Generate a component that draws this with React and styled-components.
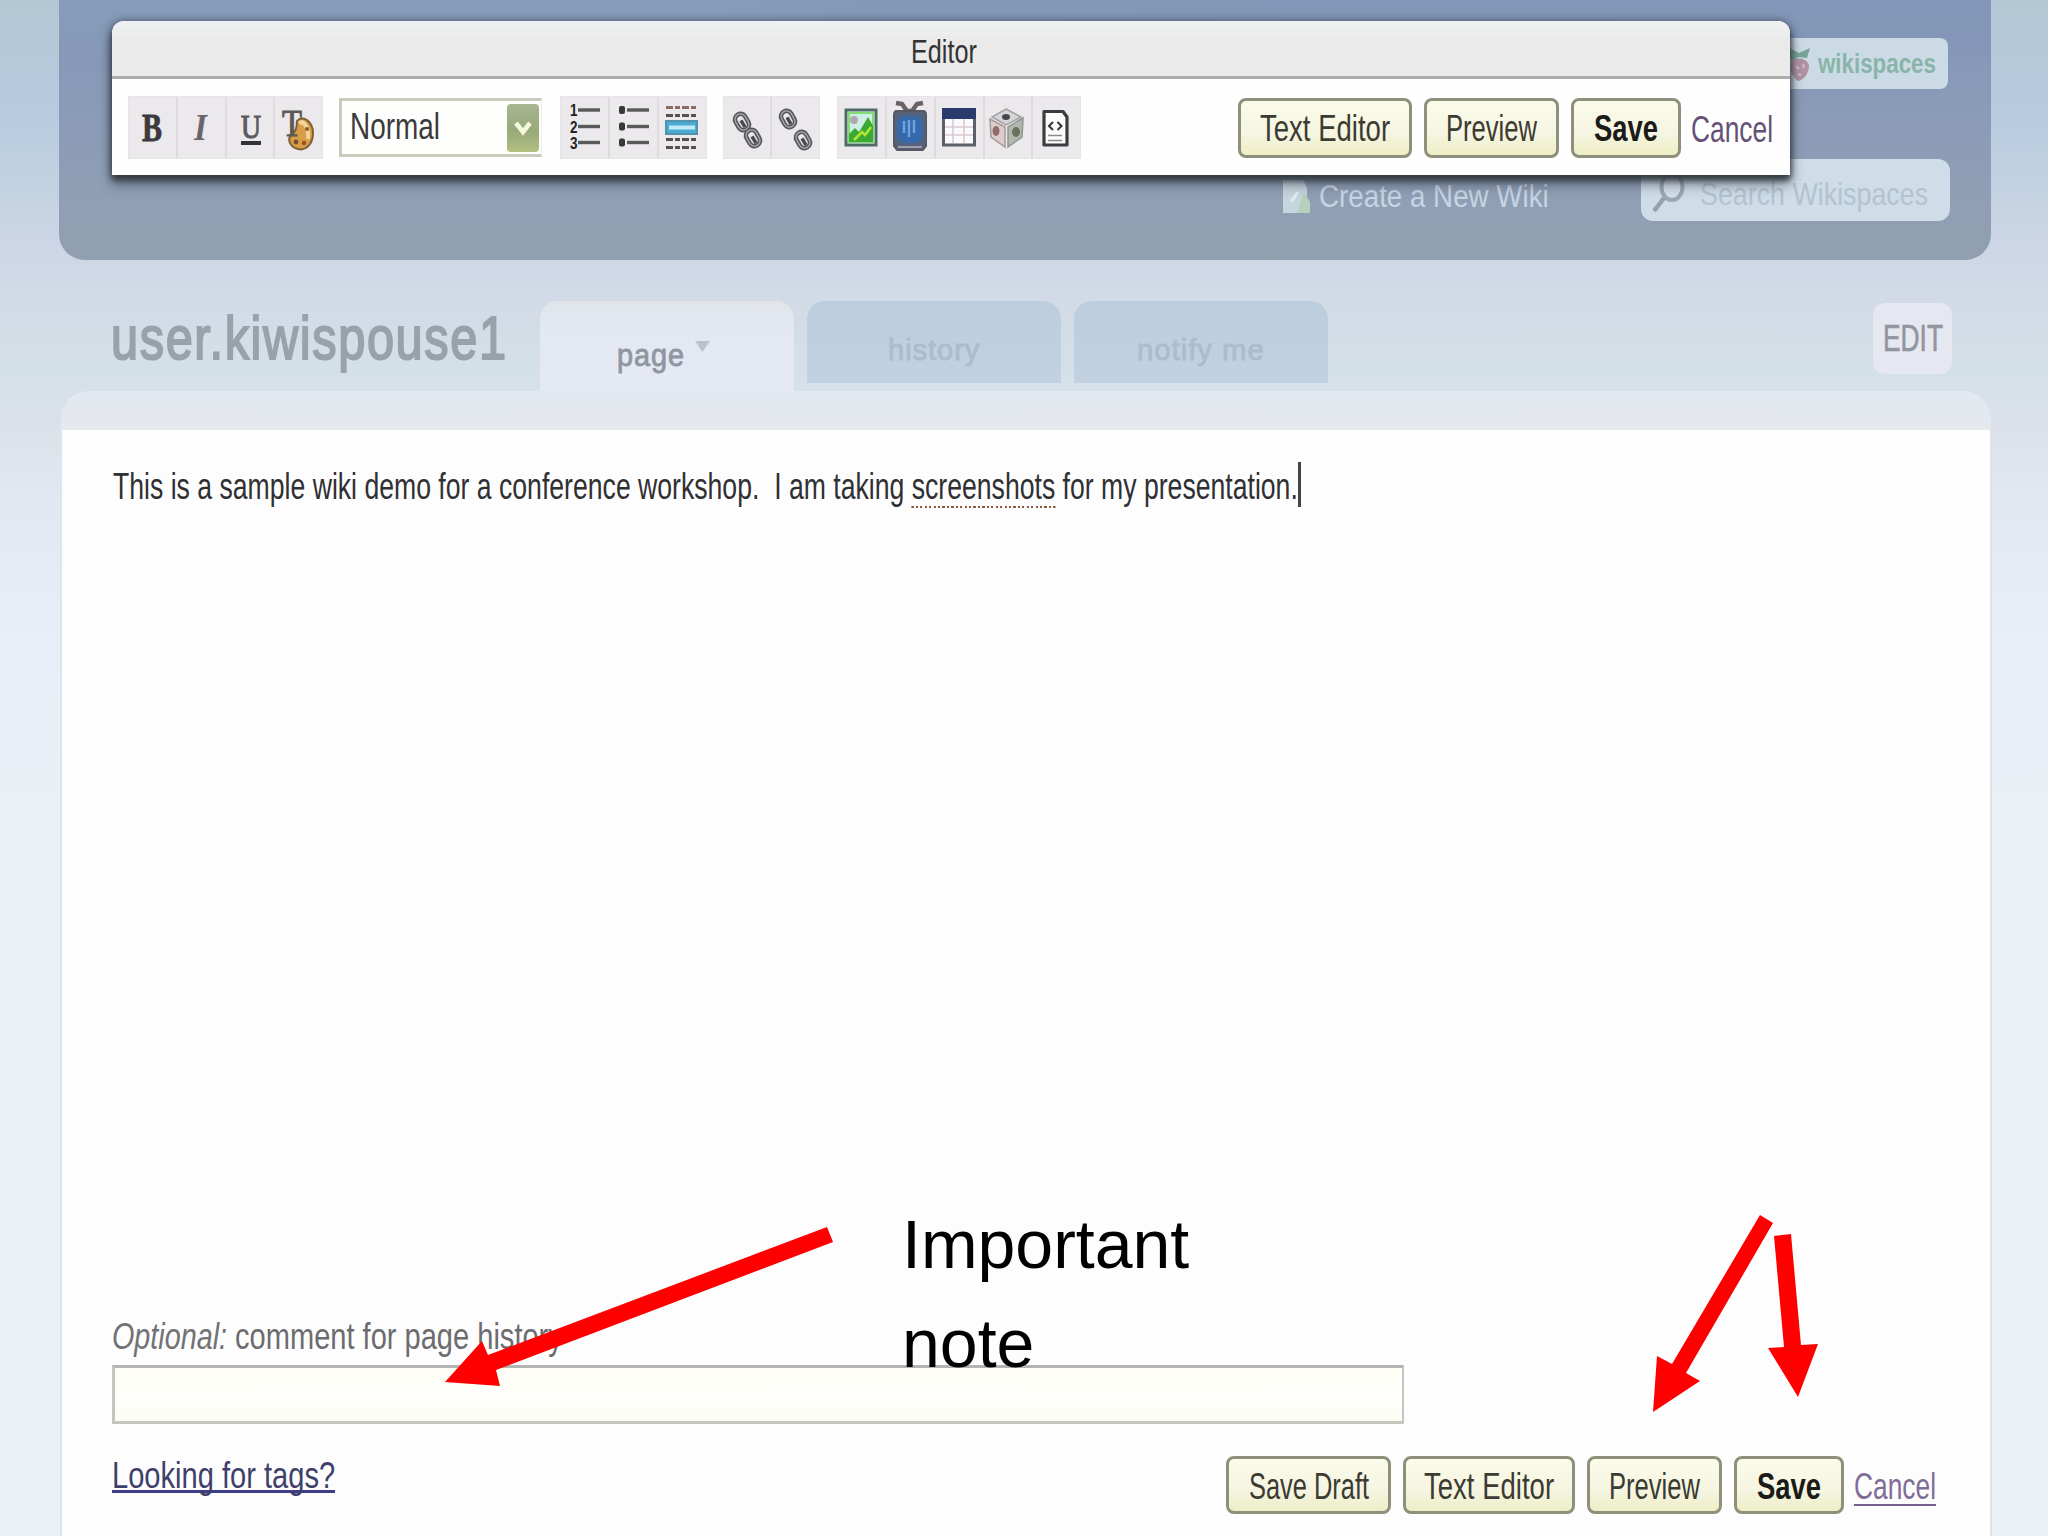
import React, { useLayoutEffect, useRef, useState } from 'react';
import styled, { createGlobalStyle, css } from 'styled-components';

const GlobalStyle = createGlobalStyle`
  * { box-sizing: border-box; }
  html, body { margin: 0; padding: 0; }
  body { font-family: "Liberation Sans", Arial, sans-serif; overflow: hidden; }
`;

/* ---------- condensed text: squeezed horizontally to a set width ---------- */
const FitBox = styled.span`
  display: inline-block;
  flex: none;
  width: ${(p) => p.$w}px;
  font-family: "Liberation Sans", Arial, sans-serif;
  font-size: ${(p) => p.$size || 36}px;
  font-weight: ${(p) => (p.$bold ? 700 : 400)};
  font-style: ${(p) => (p.$italic ? 'italic' : 'normal')};
  line-height: ${(p) => p.$line || 44}px;
  letter-spacing: ${(p) => p.$spacing || 0}px;
  color: ${(p) => p.$color || '#222'};
  -webkit-text-stroke: ${(p) => p.$stroke || 0}px ${(p) => p.$color || '#222'};
  white-space: pre;
`;
const FitInner = styled.span`
  display: inline-block;
  transform-origin: 0 50%;
`;
function Fit({ w, size, bold, italic, color, line, spacing, stroke, children }) {
  const ref = useRef(null);
  const [scale, setScale] = useState(1);
  useLayoutEffect(() => {
    if (ref.current) setScale(w / ref.current.offsetWidth);
  }, [w]);
  return (
    <FitBox $w={w} $size={size} $bold={bold} $italic={italic} $color={color} $line={line} $spacing={spacing} $stroke={stroke}>
      <FitInner ref={ref} style={{ transform: `scaleX(${scale})` }}>{children}</FitInner>
    </FitBox>
  );
}

/* ---------- page ---------- */
const Page = styled.div`
  position: relative;
  display: flex;
  flex-direction: column;
  width: 2048px;
  height: 1536px;
  overflow: hidden;
  background: linear-gradient(180deg, #b3c7d4 0, #b6cbdf 110px, #c3d2e2 190px, #cfd7e7 262px, #d3dce6 320px, #d4e0e8 370px, #dce1ea 430px, #e2e7f1 500px, #e8eef8 620px, #ebf0f7 800px, #ebf0f6 1536px);
`;

const Masthead = styled.header`
  display: flex;
  flex-direction: column;
  align-items: flex-end;
  flex: none;
  height: 260px;
  margin: 0 57px 0 59px;
  padding: 38px 41px 0 0;
  border-radius: 0 0 26px 26px;
  background:
    radial-gradient(ellipse 1300px 60px at 1950px 0, rgba(125, 142, 180, 0.35) 0, rgba(125, 142, 180, 0.3) 85%, transparent 100%),
    linear-gradient(180deg, #859cb9 0, #8799b8 60px, #8c9cb7 130px, #909fb4 200px, #919fb1 260px);
`;
const Brand = styled.div`
  display: flex;
  align-items: center;
  gap: 5px;
  width: 210px;
  height: 51px;
  margin-right: 2px;
  padding-left: 49px;
  border-radius: 8px;
  background: #ccdae6;
`;
const MastRow = styled.div`
  display: flex;
  gap: 92px;
  margin-top: 70px;
`;
const CreateLink = styled.div`
  display: flex;
  align-items: center;
  gap: 9px;
  height: 62px;
  padding-top: 13px;
`;
const Search = styled.div`
  display: flex;
  align-items: center;
  gap: 14px;
  width: 309px;
  height: 62px;
  padding: 8px 0 0 11px;
  border-radius: 12px;
  background: #cedde8;
`;

/* ---------- tabs ---------- */
const TitleRow = styled.div`
  display: flex;
  flex: none;
  height: 131px;
  padding: 41px 96px 0 110px;
`;
const Title = styled.h1`
  margin: 0;
  width: 430px;
  height: 72px;
  padding: 1px 0 0 1px;
`;
const Tab = styled.div`
  display: flex;
  align-items: center;
  justify-content: center;
  width: 254px;
  height: 82px;
  margin-left: 13px;
  padding-top: 16px;
  border-radius: 18px 18px 0 0;
  background: linear-gradient(180deg, #bccddd, #c1d1e1);
  ${(p) => p.$active && css`
    gap: 10px;
    height: 90px;
    margin-left: 0;
    padding: 20px 8px 0 0;
    background: linear-gradient(180deg, #e1e5eb, #e4e8f3 40%, #e4e9f2);
  `}
`;
const EditButton = styled.div`
  display: flex;
  align-items: center;
  justify-content: center;
  width: 79px;
  height: 71px;
  margin: 2px 0 0 auto;
  padding-top: 1px;
  border-radius: 12px;
  background: #e5e7f1;
`;
const Strip = styled.div`
  flex: none;
  height: 39px;
  margin: 0 57px 0 61px;
  border-radius: 28px 28px 0 0;
  background: linear-gradient(180deg, #e3e9f1, #e4e8ee 70%, #e6e9ec);
`;

/* ---------- document ---------- */
const Document = styled.main`
  display: flex;
  flex-direction: column;
  flex: 1;
  margin: 0 56px 0 60px;
  padding: 35px 54px 22px 50px;
  border-left: 2px solid #dce4ee;
  border-right: 2px solid #dfe2ea;
  background: #fdfdfe;
`;
const Line = styled.div`
  display: flex;
  height: 44px;
  padding-left: ${(p) => p.$indent || 0}px;
`;
const Misspelled = styled.span`
  background: repeating-linear-gradient(90deg, #8a5a44 0 3px, transparent 3px 6px) 0 100% / 100% 2px no-repeat;
  padding-bottom: 1px;
`;
const Caret = styled.span`
  width: 3px;
  height: 45px;
  margin: -3px 0 0 0;
  background: #444;
`;
const Spacer = styled.div`
  flex: 1;
`;
const CommentBox = styled.div`
  flex: none;
  width: 1292px;
  height: 59px;
  margin: 6px 0 32px;
  border: 3px solid #c6c6c0;
  border-top-color: #b4b4b2;
  border-right-width: 2px;
  background: linear-gradient(180deg, #fefef6, #fffffc 60%, #fdfdf3);
`;
const FooterRow = styled.div`
  display: flex;
  flex: none;
  height: 58px;
`;
const TagsLink = styled.a`
  display: flex;
  align-items: flex-start;
  height: 37px;
  border-bottom: 3px solid #3e3e88;
`;
const Actions = styled.div`
  display: flex;
  align-items: center;
  gap: 12px;
  height: ${(p) => p.$h}px;
  margin-left: auto;
`;
const Button = styled.button`
  display: flex;
  align-items: center;
  justify-content: center;
  flex: none;
  width: ${(p) => p.$w}px;
  height: ${(p) => p.$h || 58}px;
  padding: 3px 0 0;
  border: 3px solid #8f907c;
  border-radius: 8px;
  background: linear-gradient(180deg, #fbfbe9, #f5f5e2 60%, #eeeec6);
`;
const CancelLink = styled.a`
  display: flex;
  align-items: flex-start;
  height: 42px;
  margin-left: -2px;
  border-bottom: ${(p) => (p.$underlined ? '2px solid #75608d' : '0 solid transparent')};
`;

/* ---------- floating editor ---------- */
const EditorWindow = styled.section`
  position: absolute;
  left: 112px;
  top: 21px;
  width: 1678px;
  height: 154px;
  border-radius: 12px 12px 0 0;
  background: #fefefe;
  box-shadow: 0 5px 6px #34393f, 0 9px 14px rgba(50, 55, 70, 0.55), 0 0 8px rgba(50, 58, 70, 0.65);
`;
const EditorTitle = styled.div`
  display: flex;
  justify-content: center;
  height: 58px;
  padding: 8px 14px 0 0;
  border-bottom: 3px solid #adaeac;
  border-radius: 12px 12px 0 0;
  background: linear-gradient(180deg, #f0f1f3, #eaebe9 35%, #ebebeb);
`;
const Toolbar = styled.div`
  display: flex;
  height: 96px;
  padding: 17px 17px 0 16px;
`;
const Group = styled.div`
  display: flex;
  flex: none;
  gap: 2px;
  height: 63px;
  margin-right: ${(p) => p.$gap}px;
  background: #dddbdd;
  border: 1px solid #e6e4e6;
`;
const Cell = styled.div`
  width: 46.8px;
  background: #ebe9eb;
  svg { display: block; margin-left: -1px; }
`;
const Select = styled.div`
  display: flex;
  justify-content: space-between;
  width: 203px;
  height: 59px;
  margin: 2px 18px 0 0;
  padding: 1px 2px 0 8px;
  border: 3px solid #c9ccbc;
  border-right: 1px solid #eef0e6;
  background: #fefefd;
`;
const SelectLabel = styled.div`
  padding-top: 3px;
`;
const SelectArrow = styled.div`
  display: flex;
  align-items: center;
  justify-content: center;
  width: 32px;
  height: 48px;
  margin-top: 2px;
  border-radius: 4px;
  background: linear-gradient(180deg, #a9b692, #98a97b 55%, #b2c07e);
`;

/* ---------- annotations ---------- */
const Arrows = styled.svg`
  position: absolute;
  left: 0;
  top: 0;
  pointer-events: none;
`;
const Note = styled.div`
  position: absolute;
  left: 902px;
  top: 1195px;
  width: 330px;
  font-size: 68px;
  line-height: 98.5px;
  color: #000;
`;

const Ico = ({ children, w = 47 }) => (
  <svg width={w} height="61" viewBox={`0 0 ${w} 61`}>{children}</svg>
);
const serif = '"Liberation Serif", "Times New Roman", serif';

const BoldIcon = () => (
  <Ico><text x="14" y="44" fontFamily={serif} fontWeight="700" fontSize="39" textLength="20" lengthAdjust="spacingAndGlyphs" fill="#3c3a3e" stroke="#3c3a3e" strokeWidth="0.8">B</text></Ico>
);
const ItalicIcon = () => (
  <Ico><text x="17" y="43" fontFamily={serif} fontStyle="italic" fontWeight="700" fontSize="38" textLength="13" lengthAdjust="spacingAndGlyphs" fill="#67656b">I</text></Ico>
);
const UnderlineIcon = () => (
  <Ico>
    <text x="15" y="41" fontFamily={serif} fontSize="34" textLength="20" lengthAdjust="spacingAndGlyphs" fill="#5c5a60" stroke="#5c5a60" strokeWidth="1.2">U</text>
    <path d="M15 46H35" stroke="#343438" strokeWidth="4" />
  </Ico>
);
const TextColorIcon = () => (
  <Ico>
    <path d="M23 24C30 17 39 26 39 36C39 47 32 54 24 52C16 50 13 43 17 38C20 35 23 34 23 24Z" fill="#d99d45" stroke="#806036" strokeWidth="2" />
    <path d="M25 26C31 23 35 32 34 42" fill="none" stroke="#f3d49a" strokeWidth="4" />
    <circle cx="22" cy="45" r="2.4" fill="#754e30" /><circle cx="30" cy="46" r="2.2" fill="#9c4c25" /><circle cx="33" cy="32" r="2" fill="#8b5827" />
    <text x="8" y="39" fontFamily={serif} fontSize="38" textLength="20" lengthAdjust="spacingAndGlyphs" fill="#5c5a54" stroke="#5c5a54" strokeWidth="1">T</text>
  </Ico>
);
const rows = [13, 29.5, 45.5];
const OrderedIcon = () => (
  <Ico>
    {rows.map((y, i) => (
      <g key={y}>
        <text x="10" y={y + 6} fontWeight="700" fontSize="16" textLength="7.5" lengthAdjust="spacingAndGlyphs" fill="#222">{i + 1}</text>
        <path d={`M18 ${y}H40`} stroke="#5a5a5a" strokeWidth="3.4" />
      </g>
    ))}
  </Ico>
);
const BulletIcon = () => (
  <Ico>
    {rows.map((y) => (
      <g key={y}>
        <rect x="10" y={y - 4} width="6" height="8" rx="2" fill="#383838" />
        <path d={`M18 ${y}H40`} stroke="#5a5a5a" strokeWidth="3.4" />
      </g>
    ))}
  </Ico>
);
const RuleIcon = () => (
  <Ico>
    <g strokeWidth="3" stroke="#5a5053" strokeDasharray="7 2 5 2">
      <path d="M8 10.5H40" stroke="#8a6a64" /><path d="M8 18.5H40" /><path d="M8 42.5H40" /><path d="M8 50.5H40" />
    </g>
    <rect x="8" y="24" width="31" height="13" fill="#4aaad2" stroke="#5193ad" strokeWidth="2" />
    <path d="M11 30.5H37" stroke="#c2eaf6" strokeWidth="4" />
  </Ico>
);
const Chain = ({ x, y }) => (
  <g transform={`translate(${x} ${y}) rotate(-30)`}>
    <rect x="-5.5" y="-8.5" width="11" height="17" rx="5.5" fill="none" stroke="#58575a" strokeWidth="4.6" />
    <rect x="-5.5" y="-8.5" width="11" height="17" rx="5.5" fill="none" stroke="#aeacaf" strokeWidth="1.2" />
    <path d="M0 -2V6" stroke="#4b494c" strokeWidth="3.5" />
  </g>
);
const LinkIcon = () => <Ico><Chain x={19} y={25} /><Chain x={30} y={41} /></Ico>;
const UnlinkIcon = () => <Ico><Chain x={17} y={22} /><Chain x={32} y={43} /></Ico>;
const ImageIcon = () => (
  <Ico>
    <rect x="9" y="13" width="30" height="35" fill="#eefaf0" stroke="#4c6c65" strokeWidth="3" />
    <rect x="12" y="16" width="24" height="29" fill="#cfeee4" stroke="#86dd78" strokeWidth="2" />
    <circle cx="17" cy="23" r="4" fill="#b1a7b4" />
    <path d="M12 45V37L18 31L22 35L31 20L36 29V45Z" fill="#3aaa34" />
    <path d="M17 43L25 35L28 38L34 30" stroke="#b4e52f" strokeWidth="2.5" fill="none" />
  </Ico>
);
const TvIcon = () => (
  <Ico>
    <path d="M10 6L16 7L21 14L26 14L31 7L37 6" fill="none" stroke="#6b6168" strokeWidth="4.5" />
    <path d="M11 14H37Q40 14 40 18V49L37 53H11L8 49V18Q8 14 11 14Z" fill="#55627c" stroke="#585865" strokeWidth="2" strokeLinejoin="round" />
    <rect x="11" y="19" width="26" height="27" rx="8" fill="#3569ab" />
    <path d="M18 24V36M23 23V40M28 23V36" stroke="#6ea3dc" strokeWidth="2.5" />
    <path d="M12 50H36" stroke="#a09ca5" strokeWidth="2" />
  </Ico>
);
const TableIcon = () => (
  <Ico>
    <rect x="8.5" y="13" width="31" height="35" fill="#fafafa" stroke="#5c5e69" strokeWidth="3" />
    <rect x="7" y="11" width="34" height="11" fill="#2b3a6c" />
    <path d="M18 22V46M29 22V46M10 30H38M10 38H38" stroke="#d9c9d5" strokeWidth="1.6" />
  </Ico>
);
const CubeIcon = () => (
  <Ico>
    <path d="M22 12L37 20L22 28L8 20Z" fill="#d6d5d7" stroke="#a5a1a3" strokeWidth="1.5" />
    <path d="M6 22L21 30L21 50L7 40Z" fill="#dccdcd" stroke="#a59a9a" strokeWidth="1.5" />
    <path d="M39 21L24 30L24 50L38 40Z" fill="#b3b8ae" stroke="#92968f" strokeWidth="1.5" />
    <ellipse cx="22" cy="20" rx="4" ry="3" fill="#47464b" /><ellipse cx="12" cy="34" rx="3.5" ry="5" fill="#95686a" /><ellipse cx="32" cy="35" rx="4" ry="5" fill="#69725f" />
  </Ico>
);
const CodeIcon = () => (
  <Ico>
    <path d="M12 14.500H31L35 20V48H12Z" fill="#fbfbfb" stroke="#3c3c3e" strokeWidth="3.2" strokeLinejoin="round" />
    <path d="M21 25L17 29L21 33M25.5 25L29.5 29L25.5 33" fill="none" stroke="#333" strokeWidth="2" />
    <path d="M16 38.5H30M16 43.5H30" stroke="#8b8b8b" strokeWidth="1.6" />
  </Ico>
);
const Berry = () => (
  <svg width="26" height="38" viewBox="0 0 26 38">
    <path d="M4 17C9 11 20 13 22 20C22 29 17 35 11 36C6 33 2 25 4 17Z" fill="#b093a3" />
    <path d="M1 2L12 8L23 3L20 13L12 12L4 16Z" fill="#76a696" />
    <path d="M9 21L12 24M16 19L17 23M11 29L14 30" stroke="#d3bcc8" strokeWidth="2" />
  </svg>
);
const WikiPageIcon = () => (
  <svg width="27" height="34" viewBox="0 0 27 34">
    <path d="M0 0H20L24 8V33H0Z" fill="#c6d6df" />
    <path d="M21 12L27 22V33H14Z" fill="#b5d0bd" /><path d="M15 12L8 22" stroke="#e3edf1" strokeWidth="3" />
  </svg>
);
const Magnifier = () => (
  <svg width="34" height="42" viewBox="0 0 34 42">
    <ellipse cx="20" cy="14" rx="10.5" ry="13" fill="#d5e1ea" stroke="#9aa9b3" strokeWidth="4" />
    <path d="M12 25L2 38" stroke="#93a2ac" strokeWidth="4.5" />
  </svg>
);

export default function App() {
  return (
    <Page>
      <GlobalStyle />
      <Masthead>
        <Brand>
          <Berry />
          <Fit w={118} size={28} bold color="#88b5a8">wikispaces</Fit>
        </Brand>
        <MastRow>
          <CreateLink>
            <WikiPageIcon />
            <Fit w={230} size={31} color="#c6d5e5">Create a New Wiki</Fit>
          </CreateLink>
          <Search>
            <Magnifier />
            <Fit w={228} size={32} color="#b3c3cf">Search Wikispaces</Fit>
          </Search>
        </MastRow>
      </Masthead>

      <TitleRow>
        <Title><Fit w={397} size={61} line={72} stroke={2} spacing={2} color="#99a2ab">user.kiwispouse1</Fit></Title>
        <Tab $active>
          <Fit w={68} size={31} stroke={0.8} spacing={1} color="#90959f">page</Fit>
          <svg width="15" height="36" viewBox="0 0 15 36"><path d="M0 3H15L7.5 14Z" fill="#bdc1cb" /></svg>
        </Tab>
        <Tab><Fit w={92} size={30} stroke={0.8} spacing={1} color="#aabccd">history</Fit></Tab>
        <Tab><Fit w={128} size={30} stroke={0.8} spacing={1} color="#aabccd">notify me</Fit></Tab>
        <EditButton><Fit w={60} size={36} stroke={0.6} color="#92949e">EDIT</Fit></EditButton>
      </TitleRow>
      <Strip />

      <Document>
        <Line $indent={1}>
          <Fit w={1185} color="#303033">
            {'This is a sample wiki demo for a conference workshop.  I am taking '}
            <Misspelled>screenshots</Misspelled>
            {' for my presentation.'}
          </Fit>
          <Caret />
        </Line>
        <Spacer />
        <Line>
          <Fit w={115} size={37} italic color="#727275">Optional:</Fit>
          <Fit w={336} size={37} color="#6c6c6f">{' comment for page history'}</Fit>
        </Line>
        <CommentBox />
        <FooterRow>
          <TagsLink><Fit w={223} line={40} color="#3f3f6c">Looking for tags?</Fit></TagsLink>
          <Actions $h={58}>
            <Button $w={165}><Fit w={120} color="#3b3b32">Save Draft</Fit></Button>
            <Button $w={172}><Fit w={130} color="#3b3b32">Text Editor</Fit></Button>
            <Button $w={135}><Fit w={91} color="#3b3b32">Preview</Fit></Button>
            <Button $w={110}><Fit w={64} bold color="#1b1b18">Save</Fit></Button>
            <CancelLink $underlined><Fit w={82} line={46} color="#806d97">Cancel</Fit></CancelLink>
          </Actions>
        </FooterRow>
      </Document>

      <EditorWindow>
        <EditorTitle><Fit w={66} size={34} color="#333336">Editor</Fit></EditorTitle>
        <Toolbar>
          <Group $gap={16}>
            <Cell><BoldIcon /></Cell>
            <Cell><ItalicIcon /></Cell>
            <Cell><UnderlineIcon /></Cell>
            <Cell><TextColorIcon /></Cell>
          </Group>
          <Select>
            <SelectLabel><Fit w={90} color="#3b3b3b">Normal</Fit></SelectLabel>
            <SelectArrow>
              <svg width="18" height="17" viewBox="0 0 18 17"><path d="M2 3L9 12L16 3" fill="none" stroke="#f4f8de" strokeWidth="4.5" /></svg>
            </SelectArrow>
          </Select>
          <Group $gap={16}>
            <Cell><OrderedIcon /></Cell>
            <Cell><BulletIcon /></Cell>
            <Cell><RuleIcon /></Cell>
          </Group>
          <Group $gap={17}>
            <Cell><LinkIcon /></Cell>
            <Cell><UnlinkIcon /></Cell>
          </Group>
          <Group $gap={0}>
            <Cell><ImageIcon /></Cell>
            <Cell><TvIcon /></Cell>
            <Cell><TableIcon /></Cell>
            <Cell><CubeIcon /></Cell>
            <Cell><CodeIcon /></Cell>
          </Group>
          <Actions $h={63}>
            <Button $w={174} $h={60}><Fit w={130} color="#3b3b32">Text Editor</Fit></Button>
            <Button $w={135} $h={60}><Fit w={91} color="#3b3b32">Preview</Fit></Button>
            <Button $w={110} $h={60}><Fit w={64} bold color="#1b1b18">Save</Fit></Button>
            <CancelLink><Fit w={82} line={45} color="#655175">Cancel</Fit></CancelLink>
          </Actions>
        </Toolbar>
      </EditorWindow>

      <Note>Important note</Note>
      <Arrows width="2048" height="1536" viewBox="0 0 2048 1536" fill="#ff0000">
        <polygon points="827,1227 833,1242 496,1370 500,1386 445,1382 482,1341 488,1355" />
        <polygon points="1760,1215 1773,1223 1686,1373 1700,1381 1653,1412 1657,1356 1672,1364" />
        <polygon points="1774,1236 1791,1234 1801,1345 1818,1344 1798,1397 1768,1348 1784,1347" />
      </Arrows>
    </Page>
  );
}
